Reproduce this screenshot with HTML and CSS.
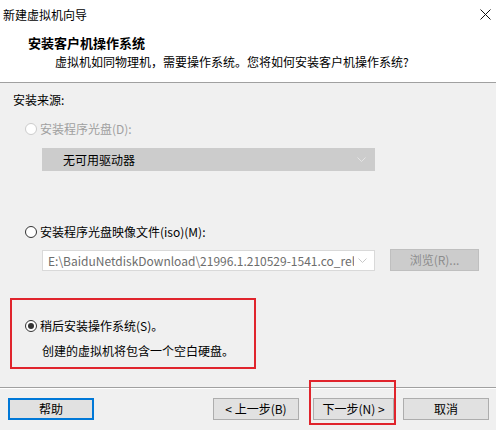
FILE: index.html
```html
<!DOCTYPE html>
<html lang="zh-CN">
<head>
<meta charset="utf-8">
<title>新建虚拟机向导</title>
<link rel="stylesheet" href="styles.css">
</head>
<body>
<div class="dialog">
  <div class="top">
    <div class="titlebar">
      <span class="title">新建虚拟机向导</span>
      <svg class="close" width="11" height="11" viewBox="0 0 11 11"><path d="M0.5 0.5L10.5 10.5M10.5 0.5L0.5 10.5" stroke="#111" stroke-width="1" fill="none"/></svg>
    </div>
    <div class="h1">安装客户机操作系统</div>
    <div class="h2">虚拟机如同物理机，需要操作系统。您将如何安装客户机操作系统?</div>
  </div>
  <div class="body">
    <div class="source">安装来源:</div>
    <div class="radio-row disabled">
      <span class="radio"></span><span>安装程序光盘(D):</span>
    </div>
    <div class="combo combo-disabled">
      <span class="combo-text">无可用驱动器</span>
      <svg class="arrow" width="9" height="5" viewBox="0 0 9 5"><path d="M0.5 0.5L4.5 4.5L8.5 0.5" stroke="#e4e4e4" fill="none"/></svg>
    </div>
    <div class="radio-row iso">
      <span class="radio"></span><span>安装程序光盘映像文件(iso)(M):</span>
    </div>
    <div class="iso-line">
      <div class="combo combo-iso">
        <span class="combo-text">E:\BaiduNetdiskDownload\21996.1.210529-1541.co_rele</span>
        <svg class="arrow" width="9" height="5" viewBox="0 0 9 5"><path d="M0.5 0.5L4.5 4.5L8.5 0.5" stroke="#c8c8c8" fill="none"/></svg>
      </div>
      <div class="btn btn-disabled browse">浏览(R)...</div>
    </div>
    <div class="later">
      <div class="radio-row checked-row">
        <span class="radio checked"></span><span>稍后安装操作系统(S)。</span>
      </div>
      <div class="later-desc">创建的虚拟机将包含一个空白硬盘。</div>
    </div>
  </div>
  <div class="footer">
    <div class="btn btn-help">帮助</div>
    <div class="nav">
      <div class="btn back">&lt; 上一步(B)</div>
      <div class="btn next">下一步(N) &gt;<span class="mark"></span></div>
      <div class="btn">取消</div>
    </div>
  </div>
</div>
</body>
</html>
```
FILE: styles.css
```css
* { box-sizing: border-box; }
html, body { margin: 0; padding: 0; }
body {
  width: 496px;
  height: 430px;
  overflow: hidden;
  background: #f0f0f0;
  font-family: "Noto Sans CJK SC", "Microsoft YaHei", sans-serif;
  font-size: 12px;
  color: #000;
}
.dialog { width: 496px; height: 430px; background: #f0f0f0; }
.top {
  background: #fff;
  height: 83px;
  border-bottom: 1px solid #a0a0a0;
}
.titlebar {
  height: 30px;
  display: flex;
  align-items: center;
  justify-content: space-between;
  padding: 0 5px 0 3px;
}
.title { line-height: 16px; }
.close { display: block; margin-top: -1px; }
.h1 {
  margin-top: 5px;
  padding-left: 28px;
  font-size: 13px;
  font-weight: bold;
  line-height: 16px;
}
.h2 {
  margin-top: 3px;
  padding-left: 55px;
  line-height: 16px;
}
.body { padding: 9px 0 0 0; height: 305px; border-bottom: 1px solid #a0a0a0; }
.source { padding-left: 13px; line-height: 16px; }
.radio-row {
  display: flex;
  align-items: center;
  gap: 3px;
  padding-left: 25px;
  line-height: 16px;
  height: 16px;
}
.radio {
  width: 12px;
  height: 12px;
  border-radius: 50%;
  border: 1px solid #333;
  background: #fff;
  display: inline-flex;
  align-items: center;
  justify-content: center;
  flex: none;
}
.disabled { margin-top: 13px; color: #a0a0a0; }
.disabled .radio { border-color: #cccccc; background: #fff; }
.combo {
  margin-left: 42px;
  width: 333px;
  display: flex;
  align-items: center;
  justify-content: space-between;
  overflow: hidden;
}
.combo-disabled {
  margin-top: 11px;
  height: 23px;
  background: #cccccc;
  border: 1px solid #cccccc;
  padding: 0 8px 0 20px;
}
.combo-text { white-space: nowrap; overflow: hidden; flex: 1; }
.arrow { flex: none; margin-left: 4px; }
.iso { margin-top: 53px; }
.iso-line {
  margin-top: 9px;
  display: flex;
  align-items: center;
  gap: 15px;
}
.combo-iso {
  height: 21px;
  background: #fff;
  border: 1px solid #d9d9d9;
  padding: 0 7px 0 5px;
  color: #6d6d6d;
}
.btn {
  height: 22px;
  width: 86px;
  background: #e1e1e1;
  border: 1px solid #adadad;
  display: flex;
  align-items: center;
  justify-content: center;
  line-height: 16px;
  position: relative;
}
.btn-disabled {
  background: #cccccc;
  border-color: #bfbfbf;
  color: #8c8c8c;
}
.browse { width: 89px; }
.later {
  margin: 27px 0 0 10px;
  width: 246px;
  height: 71px;
  border: 2px solid #e0242c;
  padding-top: 18px;
}
.checked-row { padding-left: 13px; }
.radio.checked { border-color: #333; }
.radio.checked::after {
  content: "";
  width: 6px;
  height: 6px;
  border-radius: 50%;
  background: #333;
}
.later-desc { margin-top: 9px; padding-left: 30px; line-height: 16px; }
.footer {
  border-top: 1px solid #fff;
  display: flex;
  justify-content: space-between;
  padding: 9px 7px 0 8px;
}
.btn-help {
  width: 86px;
  border: 2px solid #0078d7;
}
.nav { display: flex; }
.back { margin-right: 14px; }
.next { width: 81px; margin-right: 9px; }
.mark {
  position: absolute;
  left: -5px;
  top: -19px;
  width: 87px;
  height: 45px;
  border: 2px solid #e0242c;
}
```
